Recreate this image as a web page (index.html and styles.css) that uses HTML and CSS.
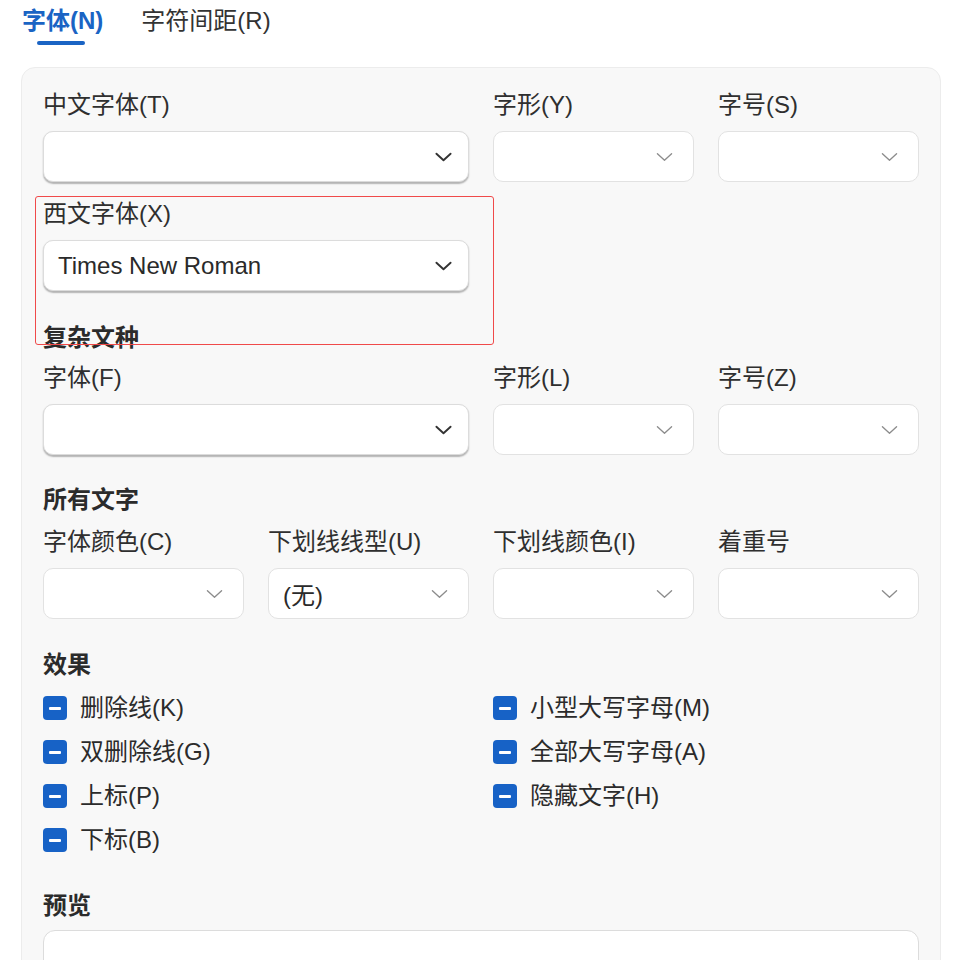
FILE: index.html
```html
<!DOCTYPE html>
<html lang="zh-CN">
<head>
<meta charset="utf-8">
<title>字体</title>
<link rel="stylesheet" href="styles.css">
</head>
<body>
<div class="page">
  <div class="tabs">
    <div class="tab active">字体(N)</div>
    <div class="tab">字符间距(R)</div>
  </div>

  <div class="panel">
    <div class="highlight"></div>

    <div class="grid4">
      <div class="field span2">
        <div class="label">中文字体(T)</div>
        <div class="select big"><span class="value"></span><svg class="chev" viewBox="0 0 18 10"><path d="M1.5 1.5 L9 8.5 L16.5 1.5"/></svg></div>
      </div>
      <div class="field">
        <div class="label">字形(Y)</div>
        <div class="select"><span class="value"></span><svg class="chev" viewBox="0 0 18 10"><path d="M1.5 1.5 L9 8.5 L16.5 1.5"/></svg></div>
      </div>
      <div class="field">
        <div class="label">字号(S)</div>
        <div class="select"><span class="value"></span><svg class="chev" viewBox="0 0 18 10"><path d="M1.5 1.5 L9 8.5 L16.5 1.5"/></svg></div>
      </div>
    </div>

    <div class="grid4 row-gap">
      <div class="field span2">
        <div class="label">西文字体(X)</div>
        <div class="select big"><span class="value">Times New Roman</span><svg class="chev" viewBox="0 0 18 10"><path d="M1.5 1.5 L9 8.5 L16.5 1.5"/></svg></div>
      </div>
    </div>

    <h3 class="heading h-complex">复杂文种</h3>
    <div class="grid4">
      <div class="field span2">
        <div class="label">字体(F)</div>
        <div class="select big"><span class="value"></span><svg class="chev" viewBox="0 0 18 10"><path d="M1.5 1.5 L9 8.5 L16.5 1.5"/></svg></div>
      </div>
      <div class="field">
        <div class="label">字形(L)</div>
        <div class="select"><span class="value"></span><svg class="chev" viewBox="0 0 18 10"><path d="M1.5 1.5 L9 8.5 L16.5 1.5"/></svg></div>
      </div>
      <div class="field">
        <div class="label">字号(Z)</div>
        <div class="select"><span class="value"></span><svg class="chev" viewBox="0 0 18 10"><path d="M1.5 1.5 L9 8.5 L16.5 1.5"/></svg></div>
      </div>
    </div>

    <h3 class="heading h-all">所有文字</h3>
    <div class="grid4">
      <div class="field">
        <div class="label">字体颜色(C)</div>
        <div class="select"><span class="value"></span><svg class="chev" viewBox="0 0 18 10"><path d="M1.5 1.5 L9 8.5 L16.5 1.5"/></svg></div>
      </div>
      <div class="field">
        <div class="label">下划线线型(U)</div>
        <div class="select"><span class="value">(无)</span><svg class="chev" viewBox="0 0 18 10"><path d="M1.5 1.5 L9 8.5 L16.5 1.5"/></svg></div>
      </div>
      <div class="field">
        <div class="label">下划线颜色(I)</div>
        <div class="select"><span class="value"></span><svg class="chev" viewBox="0 0 18 10"><path d="M1.5 1.5 L9 8.5 L16.5 1.5"/></svg></div>
      </div>
      <div class="field">
        <div class="label">着重号</div>
        <div class="select"><span class="value"></span><svg class="chev" viewBox="0 0 18 10"><path d="M1.5 1.5 L9 8.5 L16.5 1.5"/></svg></div>
      </div>
    </div>

    <h3 class="heading h-effects">效果</h3>
    <div class="checks">
      <div class="check"><span class="box"></span><span>删除线(K)</span></div>
      <div class="check"><span class="box"></span><span>小型大写字母(M)</span></div>
      <div class="check"><span class="box"></span><span>双删除线(G)</span></div>
      <div class="check"><span class="box"></span><span>全部大写字母(A)</span></div>
      <div class="check"><span class="box"></span><span>上标(P)</span></div>
      <div class="check"><span class="box"></span><span>隐藏文字(H)</span></div>
      <div class="check"><span class="box"></span><span>下标(B)</span></div>
    </div>

    <h3 class="heading h-preview">预览</h3>
    <div class="preview"></div>
  </div>
</div>
</body>
</html>
```

FILE: styles.css
```css
html, body {
  margin: 0;
  padding: 0;
  background: #ffffff;
}

body {
  font-family: "Liberation Sans", "Noto Sans CJK SC", sans-serif;
  font-size: 24px;
  color: #2b2b2b;
}

.page {
  padding: 0 25px 0 21px;
}

.tabs {
  display: flex;
  gap: 38px;
  padding-left: 1px;
  height: 67px;
}

.tab {
  position: relative;
  line-height: 30px;
  padding-top: 6px;
  color: #333;
}

.tab.active {
  color: #1a64c4;
  font-weight: bold;
}

.tab.active::after {
  content: "";
  position: absolute;
  left: 15px;
  width: 48px;
  top: 41px;
  height: 4px;
  border-radius: 2px;
  background: #1a64c4;
}

.panel {
  position: relative;
  background: #f8f8f8;
  border: 1px solid #ececec;
  border-radius: 14px;
  padding: 22px 21px 40px 21px;
  min-height: 900px;
}

.highlight {
  position: absolute;
  left: 13px;
  top: 128px;
  width: 457px;
  height: 147px;
  border: 1px solid #f04a4a;
  border-radius: 3px;
  pointer-events: none;
}

.grid4 {
  display: grid;
  grid-template-columns: repeat(4, 1fr);
  column-gap: 24px;
}

.row-gap {
  margin-top: 17px;
}

.span2 {
  grid-column: span 2;
}

.label {
  line-height: 30px;
  height: 30px;
  margin-bottom: 11px;
  color: #2f2f2f;
  white-space: nowrap;
}

.select {
  box-sizing: border-box;
  height: 51px;
  background: #fff;
  border: 1px solid #e2e2e2;
  border-radius: 10px;
  display: flex;
  align-items: center;
  padding: 0 20px 0 14px;
}

.select.big {
  border-color: #dcdcdc;
  box-shadow: 0 1.5px 1.5px rgba(0, 0, 0, 0.28);
  padding-right: 16px;
}

.value {
  flex: 1;
  color: #2a2a2a;
  white-space: nowrap;
}

.chev {
  width: 17px;
  height: 10px;
  fill: none;
  stroke: #8c8c8c;
  stroke-width: 1.4;
  stroke-linecap: round;
  stroke-linejoin: round;
}

.select.big .chev {
  stroke: #333;
  stroke-width: 2;
}

.heading {
  margin: 0;
  font-size: 24px;
  font-weight: bold;
  line-height: 30px;
  color: #2b2b2b;
}

.h-complex {
  margin-top: 32px;
  margin-bottom: 10px;
}

.h-all {
  margin-top: 30px;
  margin-bottom: 12px;
}

.h-effects {
  margin-top: 31px;
  margin-bottom: 13px;
}

.h-preview {
  margin-top: 36px;
  margin-bottom: 9px;
}

.checks {
  display: grid;
  grid-template-columns: 1fr 1fr;
  column-gap: 24px;
  row-gap: 14px;
}

.check {
  display: flex;
  align-items: center;
  gap: 13px;
  line-height: 30px;
  height: 30px;
}

.box {
  position: relative;
  width: 24px;
  height: 24px;
  border-radius: 4px;
  background: #1762c6;
  flex: none;
}

.box::after {
  content: "";
  position: absolute;
  left: 6px;
  right: 6px;
  top: 10.5px;
  height: 3px;
  border-radius: 1px;
  background: #fff;
}

.preview {
  height: 120px;
  background: #fff;
  border: 1px solid #dcdcdc;
  border-radius: 12px;
}
```
